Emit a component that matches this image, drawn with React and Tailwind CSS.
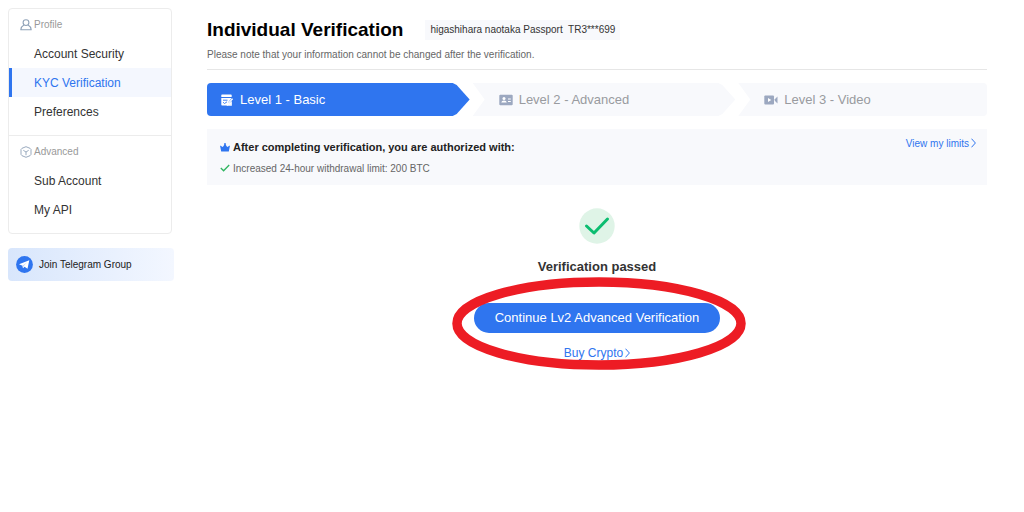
import React from 'react';

const menu = [
  {
    title: 'Profile',
    icon: ProfileIcon,
    items: ['Account Security', 'KYC Verification', 'Preferences'],
  },
  {
    title: 'Advanced',
    icon: CubeIcon,
    items: ['Sub Account', 'My API'],
  },
];

const steps = [
  {
    label: 'Level 1 - Basic',
    icon: FormIcon,
    style: 'pl-[13px] rounded-l bg-[#2f75ef] text-white [clip-path:polygon(0_0,calc(100%_-_17px)_0,calc(100%_-_13px)_2px,100%_50%,calc(100%_-_13px)_calc(100%_-_2px),calc(100%_-_17px)_100%,0_100%)]',
  },
  {
    label: 'Level 2 - Advanced',
    icon: CardIcon,
    style: 'pl-[26px] bg-[#f8f9fc] text-[#999b9f] [clip-path:polygon(0_0,calc(100%_-_17px)_0,calc(100%_-_13px)_2px,100%_50%,calc(100%_-_13px)_calc(100%_-_2px),calc(100%_-_17px)_100%,0_100%,12px_50%)]',
  },
  {
    label: 'Level 3 - Video',
    icon: VideoIcon,
    style: 'pl-[26px] rounded-r bg-[#f8f9fc] text-[#999b9f] [clip-path:polygon(0_0,100%_0,100%_100%,0_100%,12px_50%)]',
  },
];

function ProfileIcon() {
  return (
    <svg className="w-3 h-3" viewBox="0 0 12 12" fill="none" stroke="#8fa2b8" strokeWidth="1.1">
      <circle cx="6" cy="3.600" r="2.900" />
      <path d="M3.900 6C2.200 6.900 1 8.600.8 10.800h10.400C11 8.600 9.800 6.900 8.100 6" strokeLinejoin="round" />
    </svg>
  );
}

function CubeIcon() {
  return (
    <svg className="w-3 h-3" viewBox="0 0 12 12" fill="none" stroke="#8fa2b8" strokeWidth="0.9" strokeLinejoin="round">
      <path d="M6 .7 10 2.300 11 3.400v5L10 9.700 6 11.300 2 9.700 1 8.400v-5L2 2.300z" />
      <path d="M3.300 4.300 6 6l2.700-1.700M6 6v3.200" />
    </svg>
  );
}

function FormIcon() {
  return (
    <svg className="w-[14px] h-3" viewBox="0 0 14 12">
      <path fill="#fff" d="M2 .5h9a.7.7 0 0 1 .7.7V3H1.300V1.200A.7.700 0 0 1 2 .5zM1.300 4h10.400L8 8.500v3H2a.7.700 0 0 1-.7-.7z" />
      <path stroke="#2f75ef" strokeWidth=".9" fill="none" d="M3 6.200h4.500M3 8.200l1.500 1.300L7 7.800" />
      <path stroke="#fff" strokeWidth="1.300" fill="none" d="M12.600 4.800 8 9.500l-.4 1.300 1.300-.4 2.300-2v2.600H8" />
    </svg>
  );
}

function CardIcon() {
  return (
    <svg className="w-[14px] h-3" viewBox="0 0 14 12">
      <rect x=".3" y=".8" width="13.400" height="10.400" rx="1" fill="#9ca8c0" />
      <circle cx="5" cy="4.500" r="1.500" fill="#fff" />
      <path d="M2.300 8.600c.2-1.500 1.300-2.200 2.700-2.200s2.500.7 2.700 2.200z" fill="#fff" />
      <path d="M9 5h2.800M9 7.500h2.800" stroke="#fff" strokeWidth="1" />
    </svg>
  );
}

function VideoIcon() {
  return (
    <svg className="w-[14px] h-3" viewBox="0 0 14 12" fill="#9ca8c0">
      <rect x=".3" y="1.500" width="9.700" height="9" rx="1" />
      <path d="M10.800 5.200 13.500 2.500v7L10.800 6.800z" />
      <path d="M4 4v4l3.300-2z" fill="#fff" />
    </svg>
  );
}

function Chevron() {
  return (
    <svg className="w-[5px] h-[10px]" viewBox="0 0 5 10" fill="none" stroke="currentColor" strokeWidth="1">
      <path d="M.5.700 4.400 5 .5 9.300" />
    </svg>
  );
}

function Sidebar() {
  return (
    <aside className="w-[166px] shrink-0 text-[#333]">
      <nav className="mr-[2px] border border-[#ececec] rounded">
        {menu.map(({ title, icon: Icon, items }) => (
          <div key={title} className="pt-px pb-2 border-b border-[#ececec] last:border-b-0">
            <h2 className="flex items-center gap-[2px] h-[29px] pl-[11px] text-[10px] text-[#999]">
              <Icon /> {title}
            </h2>
            <ul className="pb-px">
              {items.map((item) => (
                <li key={item}>
                  <a
                    href="#"
                    className={
                      item === 'KYC Verification'
                        ? 'flex items-center h-[29px] pl-[22px] text-xs border-l-3 border-[#2f75ef] bg-[#f4f7fe] text-[#2f75ef]'
                        : 'flex items-center h-[29px] pl-[25px] text-xs'
                    }
                  >
                    {item}
                  </a>
                </li>
              ))}
            </ul>
          </div>
        ))}
      </nav>

      <a
        href="#"
        className="flex items-center gap-[6px] h-[33px] mt-[14px] pl-2 rounded bg-linear-to-r from-[#d8e6fc] to-[#f3f7ff] text-[10px] text-[#222]"
      >
        <svg className="w-[17px] h-[17px]" viewBox="0 0 17 17">
          <circle cx="8.500" cy="8.500" r="8.400" fill="#2f75ef" />
          <path d="M3 8.300 13.300 4.300 11.500 12.700 8.500 10.700 7 12.200 6.500 9.700z" fill="#fff" />
          <path d="M6.500 9.700 11 6.300 7.500 10.200 7 12.200z" fill="#bcd3fb" />
        </svg>
        Join Telegram Group
      </a>
    </aside>
  );
}

export default function App() {
  return (
    <div className="flex gap-[33px] pt-2 pl-2 pr-[37px] font-['Liberation_Sans',Arial,sans-serif]">
      <Sidebar />

      <main className="flex-1 min-w-0">
        <header className="pt-2 pb-[7px] border-b border-[#e6e6e6]">
          <div className="flex items-center gap-[22px]">
            <h1 className="text-[19px] leading-7 font-bold text-black">Individual Verification</h1>
            <span className="px-[5px] bg-[#f8f9fc] text-[10px] leading-5 text-[#333] whitespace-pre">
              higashihara naotaka Passport  TR3***699
            </span>
          </div>
          <p className="mt-1 text-[10px] leading-[14px] text-[#666]">
            Please note that your information cannot be changed after the verification.
          </p>
        </header>

        <ol className="grid grid-cols-[263fr_263fr_249fr] gap-[3px] mt-[13px]">
          {steps.map(({ label, icon: Icon, style }) => (
            <li key={label} className={`flex items-center gap-[6px] h-[33px] text-[13px] ${style}`}>
              <Icon /> {label}
            </li>
          ))}
        </ol>

        <section className="flex justify-between mt-[13px] pt-[7px] pb-[10px] pl-[13px] pr-[11px] bg-[#f8f9fc] text-[10px]">
          <div>
            <h2 className="flex items-center gap-[3px] mt-1 h-[14px] text-[11px] font-bold text-[#222]">
              <svg className="w-[10px] h-[9px]" viewBox="0 0 10 9" fill="#2f75ef">
                <path d="M0 2.500 2.800 4 5 .8 7.200 4 10 2.500 8.800 8.500H1.200z" />
                <circle cx="5" cy="1" r=".9" />
              </svg>
              After completing verification, you are authorized with:
            </h2>
            <p className="flex items-center gap-[3px] mt-[7px] h-[14px] text-[#666]">
              <svg className="w-[10px] h-[8px]" viewBox="0 0 10 8" fill="none" stroke="#2fb560" strokeWidth="1.300">
                <path d="M.8 4 3.600 6.800 9.200 1" />
              </svg>
              Increased 24-hour withdrawal limit: 200 BTC
            </p>
          </div>
          <a href="#" className="flex items-center gap-[2px] h-[14px] text-[#2f75ef]">
            View my limits <Chevron />
          </a>
        </section>

        <section className="relative flex flex-col items-center pt-[23px] pb-[10px]">
          <svg className="w-9 h-9" viewBox="0 0 36 36" fill="none">
            <circle cx="18" cy="18" r="17.700" fill="#dff4e7" />
            <path d="m7.500 18 7.500 7L28.500 11" stroke="#0bbd70" strokeWidth="3" strokeLinecap="round" strokeLinejoin="round" />
          </svg>
          <h2 className="mt-[15px] text-[13px] leading-4 font-bold text-[#333]">Verification passed</h2>
          <button type="button" className="mt-7 w-[246px] h-[30px] rounded-full bg-[#2f75ef] text-[13px] text-white">
            Continue Lv2 Advanced Verification
          </button>
          <a href="#" className="flex items-center gap-[2px] mt-3 h-4 text-xs text-[#2f75ef]">
            Buy Crypto <Chevron />
          </a>

          {/* red highlight drawn over the actions */}
          <svg
            className="absolute top-[92px] left-1/2 -translate-x-1/2 ml-[2px] w-[294px] h-[93px] pointer-events-none"
            viewBox="0 0 294 93"
            fill="none"
          >
            <ellipse cx="147" cy="46.500" rx="142" ry="41.500" stroke="#ed1c24" strokeWidth="9.500" />
          </svg>
        </section>
      </main>
    </div>
  );
}
